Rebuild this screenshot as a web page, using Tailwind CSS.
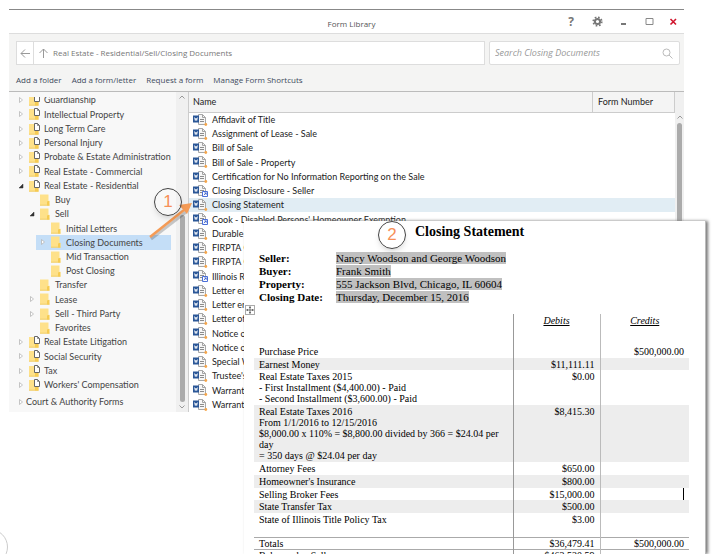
<!DOCTYPE html>
<html lang="en">
<head>
<meta charset="utf-8">
<title>Form Library</title>
<script src="https://cdn.jsdelivr.net/npm/@tailwindcss/browser@4"></script>
</head>
<body class="relative h-screen overflow-hidden bg-white pt-[9px] font-[Lato,'Open_Sans',sans-serif] text-[9px] text-[#444]">
<svg class="hidden">
  <symbol id="word" viewBox="0 0 16 14">
    <path d="M5.500 1.500H9.500L12.500 4.500V11.500H5.500Z" fill="#f6f6f6" stroke="#a8a8a8"/>
    <path d="M9.500 1.500V4.500H12.500" fill="none" stroke="#a2a2a2"/>
    <path d="M7 6.500H11M7 8.500H11" stroke="#8c8c8c"/>
    <path d="M0 2.500H6V9.500H0Z" fill="#2b5797"/>
    <path d="M1.500 4.500L2.300 7.500L3 5L3.700 7.500L4.500 4.500" fill="none" stroke="#fff" stroke-width=".8"/>
  </symbol>
  <symbol id="dot" viewBox="0 0 16 14"><circle cx="12.800" cy="11.500" r="1.400" fill="#f5a54a"/></symbol>
  <symbol id="link" viewBox="0 0 16 14">
    <path d="M9.500 7.500H14.500V12.500H9.500Z" fill="#fff" stroke="#4a6fd8"/>
    <path d="M10.800 11.200L13.200 8.800M11.300 8.900H13.200V10.800" fill="none" stroke="#2f55c8" stroke-width=".8"/>
  </symbol>
  <symbol id="folder" viewBox="0 0 12 14">
    <path d="M0 1.500H8.500V8H9.500V12.500H0Z" fill="#fee18a"/>
    <path d="M0 12.200H9.500" stroke="#efc95c" stroke-width=".8"/>
    <path d="M7 8.500L9.300 7.800V12.500H7Z" fill="#f6cb52"/>
  </symbol>
  <symbol id="area" viewBox="0 0 12 14">
    <path d="M0 2H9.500V12.500H0Z" fill="#fee18a"/>
    <path d="M0 12.200H9.500" stroke="#efc95c" stroke-width=".8"/>
    <path d="M6 9H9.500V12.500H6Z" fill="#f6cb52"/>
    <path d="M5.500 1.500H8.500L10.500 3.500V8.500H5.500Z" fill="#fff" stroke="#666"/>
    <path d="M8.500 1.500V3.500H10.500" fill="none" stroke="#666" stroke-width=".7"/>
  </symbol>
  <symbol id="closed" viewBox="0 0 6 8"><path d="M.5 1.500L3.500 4L.5 6.500Z" fill="#fff" stroke="#b5b5b5" stroke-width=".8"/></symbol>
  <symbol id="open" viewBox="0 0 6 8"><path d="M4 2V6H0Z" fill="#333" stroke="#333" stroke-width=".5"/></symbol>
  <symbol id="up" viewBox="0 0 6 4"><path d="M.5 3.500L3 1L5.500 3.500" fill="none" stroke="#999"/></symbol>
  <symbol id="down" viewBox="0 0 6 4"><path d="M.5 .5L3 3L5.500 .5" fill="none" stroke="#999"/></symbol>
</svg>

<main class="mr-[33px] ml-[9px] border-t border-[#888]">
  <header class="relative flex h-[23px] items-center justify-end">
    <h1 class="absolute inset-x-0 top-[8px] pl-[10px] text-center font-['Open_Sans',sans-serif] text-[8px] leading-3 text-[#555]">Form Library</h1>
    <div class="flex items-center text-[#777]">
      <button aria-label="Help" class="w-[26px] text-center font-['Open_Sans',sans-serif] text-[12px] leading-4 font-bold">?</button>
      <button aria-label="Settings" class="flex w-[26px] justify-center"><svg class="size-[11px]" viewBox="0 0 11 11"><g fill="none" stroke="#777"><circle cx="5.500" cy="5.500" r="2.600" stroke-width="2"/><circle cx="5.500" cy="5.500" r="4.300" stroke-width="1.600" stroke-dasharray="1.700 1.677"/></g></svg></button>
      <button aria-label="Minimize" class="flex w-[26px] justify-center"><svg class="h-[11px] w-[7px]" viewBox="0 0 7 11"><path d="M1 8H6" stroke="#777" stroke-width="2"/></svg></button>
      <button aria-label="Maximize" class="flex w-[26px] justify-center"><svg class="h-[11px] w-[9px]" viewBox="0 0 9 11"><path d="M1 2.500H8V8.500H1Z" fill="none" stroke="#888"/></svg></button>
      <button aria-label="Close" class="flex w-[22px] justify-center text-[#d0142c]"><svg class="size-[9px]" viewBox="0 0 9 9"><path d="M1.500 2L7 7.500M7 2L1.500 7.500" stroke="currentColor" stroke-width="1.600"/></svg></button>
    </div>
  </header>

  <div class="border-t border-[#ddd] bg-[#f4f4f3] font-['Open_Sans',sans-serif] text-[8px]">
    <div class="flex gap-[4px] pt-[7px] pr-[4px] pl-[7px]">
      <div class="flex h-[24px] flex-1 items-center border border-[#ddd] bg-white text-[#777]">
        <button aria-label="Back" class="flex h-full w-[17px] items-center justify-center border-r border-[#ddd]"><svg class="size-[11px]" viewBox="0 0 11 11"><path d="M10 5.500H1M5 1.500L1 5.500L5 9.500" fill="none" stroke="#999"/></svg></button>
        <button aria-label="Up" class="flex w-[19px] justify-center"><svg class="size-[11px]" viewBox="0 0 11 11"><path d="M5.500 10V1M1.500 5L5.500 1L9.500 5" fill="none" stroke="#999"/></svg></button>
        <span>Real Estate - Residential/Sell/Closing Documents</span>
      </div>
      <div class="flex h-[24px] w-[191px] items-center rounded-[2px] border border-[#ddd] bg-white pr-[6px] pl-[5px]">
        <input type="search" aria-label="Search Closing Documents" placeholder="Search Closing Documents" class="min-w-0 flex-1 text-[9px] italic placeholder:text-[#999]">
        <svg class="size-[11px]" viewBox="0 0 11 11"><g fill="none" stroke="#bbb"><circle cx="4.500" cy="4.500" r="3.500"/><path d="M7 7L10.500 10.500"/></g></svg>
      </div>
    </div>
    <nav class="flex h-[26px] items-center gap-[10px] pt-[3px] pl-[7px] text-[#3d4a5c]">
      <button>Add a folder</button><button>Add a form/letter</button><button>Request a form</button><button>Manage Form Shortcuts</button>
    </nav>
  </div>

  <div class="flex border-t border-[#bbb]">
    <aside class="flex h-[320px] w-[180px] border-r border-[#ccc] bg-[#f8f8f8]">
      <div class="mt-[5px] flex w-[165px] flex-col overflow-hidden">
        <ul id="tree" class="-mt-[4px] mr-[4px] grid h-[299px] auto-rows-fr"></ul>
        <div class="mt-[3px] flex items-center gap-px pl-[10px]"><svg class="h-[8px] w-[6px]"><use href="#closed"/></svg>Court &amp; Authority Forms</div>
      </div>
      <div class="ml-auto flex w-[12px] flex-col items-center bg-[#f0f0f0] py-[3px]">
        <svg class="h-[4px] w-[6px]"><use href="#up"/></svg>
        <div class="mt-auto mb-[3px] h-[187px] w-[5px] rounded-full bg-[#ababab]"></div>
        <svg class="h-[4px] w-[6px]"><use href="#down"/></svg>
      </div>
    </aside>
    <table class="h-[320px] flex-1 table-fixed text-[#222]">
      <thead class="bg-[#f4f4f4]">
        <tr class="h-[20px] text-left">
          <th class="border-b border-[#ccc] pl-[4px] font-normal">Name</th>
          <th class="w-[82px] border-x border-b border-[#ccc] pl-[5px] font-normal">Form Number</th>
        </tr>
      </thead>
      <tbody id="forms"></tbody>
    </table>
    <div class="flex w-[9px] flex-col items-center bg-[#f0f0f0] pt-[23px]">
      <svg class="h-[4px] w-[6px]"><use href="#up"/></svg>
      <div class="mt-[4px] w-[5px] flex-1 rounded-full bg-[#ababab]"></div>
    </div>
  </div>
</main>

<svg class="absolute top-[180px] left-[140px] h-[70px] w-[70px]" viewBox="140 180 70 70" aria-hidden="true">
  <path d="M151 239L186 212" stroke="#0003" stroke-width="3"/>
  <path d="M150 237L184 210" stroke="#f59b56" stroke-width="2.500"/>
  <path d="M192 203L187 214L179 205Z" fill="#f59b56"/>
</svg>
<div class="absolute top-[188px] left-[154px] flex size-[28px] items-center justify-center rounded-full border border-[#444] font-['Liberation_Sans',sans-serif] text-[17px] text-[#f79058] shadow-md">1</div>
<div class="absolute top-[529px] -left-[28px] size-[36px] rounded-full border border-[#ccc]"></div>

<article class="absolute top-[221px] right-[11px] bottom-0 left-[244px] overflow-hidden border-r border-[#bbb] bg-white pr-[16px] pl-[10px] font-['Liberation_Serif',serif] text-[10px] leading-[11px] text-black shadow-[2px_0_3px_#777]">
  <h2 class="pt-[3px] pl-[161px] text-[14px] leading-4 font-bold">Closing Statement</h2>
  <dl class="mt-[12px] grid grid-cols-[77px_1fr] pl-[5px] text-[11px] leading-[13px]">
    <dt class="font-bold">Seller:</dt><dd><mark class="bg-[#c0c0c0]">Nancy Woodson and George Woodson</mark></dd>
    <dt class="font-bold">Buyer:</dt><dd><mark class="bg-[#c0c0c0]">Frank Smith</mark></dd>
    <dt class="font-bold">Property:</dt><dd><mark class="bg-[#c0c0c0]">555 Jackson Blvd, Chicago, IL 60604</mark></dd>
    <dt class="font-bold">Closing Date:</dt><dd><mark class="bg-[#c0c0c0]">Thursday, December 15, 2016</mark></dd>
  </dl>
  <table class="mt-[10px] w-full table-fixed [&_td]:px-[5px] [&_td]:align-top">
    <colgroup><col><col class="w-[87px]"><col class="w-[89px]"></colgroup>
    <thead>
      <tr class="h-[31px] align-top italic">
        <th></th>
        <th class="border-l border-[#999] pt-px font-normal underline">Debits</th>
        <th class="border-l border-[#bbb] pt-px font-normal underline">Credits</th>
      </tr>
    </thead>
    <tbody class="[&_td:nth-child(2)]:border-l [&_td:nth-child(2)]:border-[#999] [&_td:nth-child(2)]:text-right [&_td:nth-child(3)]:border-l [&_td:nth-child(3)]:border-[#bbb] [&_td:nth-child(3)]:text-right">
      <tr class="h-[13px]"><td class="pt-px">Purchase Price</td><td class="pt-px"></td><td class="pt-px">$500,000.00</td></tr>
      <tr class="h-[12px] bg-[#ededed]"><td class="pt-px">Earnest Money</td><td class="pt-px">$11,111.11</td><td></td></tr>
      <tr class="h-[35px]"><td class="pt-px">Real Estate Taxes 2015<br>- First Installment ($4,400.00) - Paid<br>- Second Installment ($3,600.00) - Paid</td><td class="pt-px">$0.00</td><td></td></tr>
      <tr class="h-[57px] bg-[#ededed]"><td class="pt-px">Real Estate Taxes 2016<br>From 1/1/2016 to 12/15/2016<br>$8,000.00 x 110% = $8,800.00 divided by 366 = $24.04 per<br>day<br>= 350 days @ $24.04 per day</td><td class="pt-px">$8,415.30</td><td></td></tr>
      <tr class="h-[13px]"><td class="pt-px">Attorney Fees</td><td class="pt-px">$650.00</td><td></td></tr>
      <tr class="h-[13px] bg-[#ededed]"><td class="pt-px">Homeowner's Insurance</td><td class="pt-px">$800.00</td><td></td></tr>
      <tr class="h-[12px]"><td class="pt-px">Selling Broker Fees</td><td class="pt-px">$15,000.00</td><td><span class="float-right h-[12px] w-px bg-black"></span></td></tr>
      <tr class="h-[13px] bg-[#ededed]"><td class="pt-px">State Transfer Tax</td><td class="pt-px">$500.00</td><td></td></tr>
      <tr class="h-[24px]"><td class="pt-px">State of Illinois Title Policy Tax</td><td class="pt-px">$3.00</td><td></td></tr>
      <tr class="h-[11px] border-y border-[#aaa]"><td>Totals</td><td>$36,479.41</td><td>$500,000.00</td></tr>
      <tr class="h-[11px]"><td>Balance due Seller</td><td>$463,520.59</td><td></td></tr>
    </tbody>
  </table>
  <button aria-label="Select table" class="absolute top-[84px] left-px border border-[#aaa] bg-white"><svg class="size-[8px]" viewBox="0 0 8 8"><path d="M4 0V8M0 4H8M3 1.500H5M3 6.500H5M1.500 3V5M6.500 3V5" stroke="#666" stroke-width=".9"/></svg></button>
</article>
<div class="absolute top-[221px] left-[378px] flex size-[28px] items-center justify-center rounded-full border border-[#444] font-['Liberation_Sans',sans-serif] text-[17px] text-[#f79058] shadow-md">2</div>

<script>
const levels = [
  { row: 'ml-[5px] pl-[5px]', icon: 'area' },
  { row: 'ml-[16px] pl-[5px]', icon: 'folder' },
  { row: 'ml-[27px] pl-[5px]', icon: 'folder' }
];
const nodes = [
  [0,'closed','Guardianship'],[0,'closed','Intellectual Property'],[0,'closed','Long Term Care'],[0,'closed','Personal Injury'],
  [0,'closed','Probate & Estate Administration'],[0,'closed','Real Estate - Commercial'],[0,'open','Real Estate - Residential'],
  [1,'','Buy'],[1,'open','Sell'],[2,'','Initial Letters'],[2,'closed','Closing Documents'],[2,'','Mid Transaction'],[2,'','Post Closing'],
  [1,'','Transfer'],[1,'closed','Lease'],[1,'closed','Sell - Third Party'],[1,'','Favorites'],
  [0,'closed','Real Estate Litigation'],[0,'closed','Social Security'],[0,'closed','Tax'],[0,'closed',"Workers' Compensation"]
];
document.getElementById('tree').innerHTML = nodes.map(([l, state, name]) =>
  `<li class="flex items-center whitespace-nowrap ${levels[l].row} ${name === 'Closing Documents' ? 'bg-[#c4def7]' : ''}">
    <svg class="mr-[4px] h-[8px] w-[6px] shrink-0">${state ? `<use href="#${state}"/>` : ''}</svg>
    <svg class="mr-[3px] h-[14px] w-[12px] shrink-0"><use href="#${levels[l].icon}"/></svg>${name}</li>`).join('');

const forms = ['Affidavit of Title','Assignment of Lease - Sale','Bill of Sale','Bill of Sale - Property',
  'Certification for No Information Reporting on the Sale','Closing Disclosure - Seller','Closing Statement',
  "Cook - Disabled Persons' Homeowner Exemption",'Durable','FIRPTA C','FIRPTA C','Illinois R','Letter en','Letter en','Letter of',
  'Notice o','Notice o','Special W',"Trustee's",'Warrant','Warrant'];
const linked = [5, 7, 11];
document.getElementById('forms').innerHTML = forms.map((name, i) =>
  `<tr class="${i === 6 ? 'bg-[#e1edf4]' : ''}"><td class="p-0 pl-[4px]"><span class="flex items-center gap-[3px] whitespace-nowrap">
    <svg class="h-[14px] w-[16px] shrink-0"><use href="#word"/><use href="#${linked.includes(i) ? 'link' : 'dot'}"/></svg>${name}</span></td><td class="p-0"></td></tr>`).join('');
</script>
</body>
</html>
